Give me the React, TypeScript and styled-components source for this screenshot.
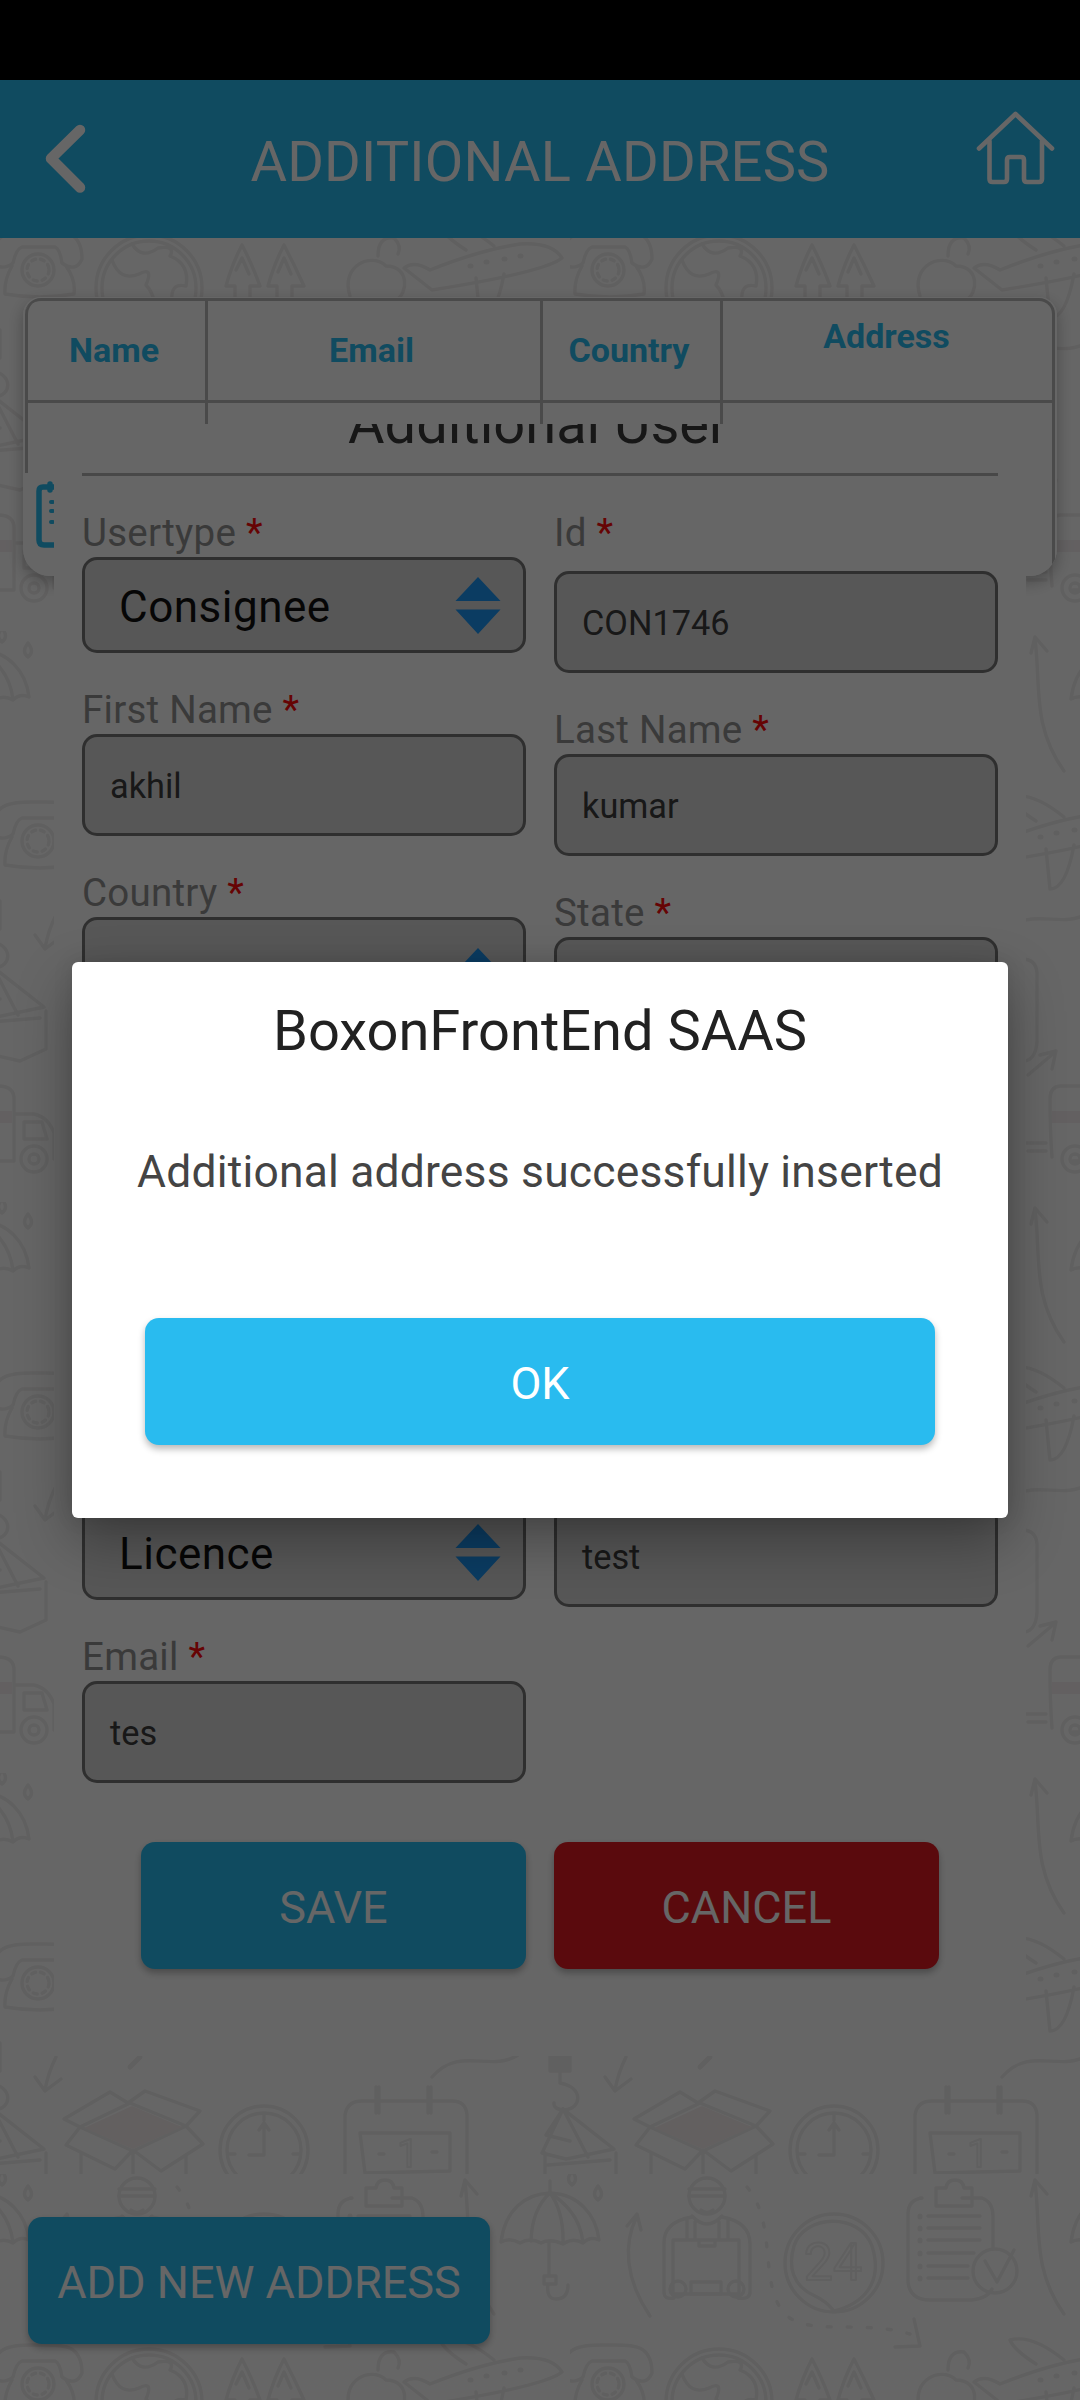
import React from "react";
import styled, { createGlobalStyle } from "styled-components";

const GlobalStyle = createGlobalStyle`
  *, *::before, *::after { box-sizing: border-box; }
  html, body { margin: 0; padding: 0; background: #000; }
  body { font-family: Roboto, "Noto Sans", sans-serif; -webkit-font-smoothing: antialiased; }
  h1, h2, p { margin: 0; font-weight: 400; }
  button { font: inherit; border: 0; padding: 0; }
`;

const BLUE = "#29bbef";

const Screen = styled.div`
  position: relative;
  display: flex;
  flex-direction: column;
  width: 1080px;
  height: 2400px;
  overflow: hidden;
  background: #fff;
`;

const StatusBar = styled.div`
  flex: 0 0 80px;
  background: #000;
`;

const Header = styled.header`
  flex: 0 0 158px;
  display: grid;
  grid-template-columns: 90px 1fr 90px;
  align-items: center;
  padding: 0 16px 0 28px;
  background: ${BLUE};
  color: #fff;
`;

const HeaderTitle = styled.h1`
  font-size: 56px;
  line-height: 64px;
  letter-spacing: 0.2px;
  text-align: center;
  padding: 6px 12px 0 0;
  white-space: nowrap;
`;

const BackIcon = styled.svg`
  width: 60px;
  height: 80px;
  margin-left: 6px;
`;

const HomeIcon = styled.svg`
  width: 80px;
  height: 80px;
  justify-self: end;
  margin: 0 9px 20px 0;
`;

const Main = styled.main`
  position: relative;
  flex: 0 0 1936px;
  display: grid;
  grid-template: 1936px / 1080px;
`;

const Backdrop = styled.svg`
  grid-area: 1 / 1;
  width: 100%;
  height: 100%;
`;

const TableCard = styled.section`
  grid-area: 1 / 1;
  position: relative;
  align-self: start;
  width: 1034px;
  height: 279px;
  margin: 59px 0 0 23px;
  padding: 1px 2px 0;
  overflow: hidden;
  border-radius: 18px 18px 27px 27px;
  background: #fff;
`;

const CardShadow = styled.div`
  grid-area: 1 / 1;
  align-self: start;
  width: 1034px;
  height: 279px;
  margin: 59px 0 0 23px;
  border-radius: 18px 18px 27px 27px;
  box-shadow: 0 6px 16px rgba(0, 0, 0, 0.28);
`;

const TableRow = styled.div<{ $height: number; $head?: boolean }>`
  display: grid;
  grid-template-columns: 180px 335px 180px 335px;
  height: ${(p) => p.$height}px;
  border: 0 solid #b9b9b9;
  border-right-width: 3px;
  border-top-width: 3px;
  border-radius: ${(p) => (p.$head ? "16px 16px 0 0" : "0")};
`;

const TableCell = styled.div<{ $lift?: boolean; $short?: boolean; $first?: boolean }>`
  display: flex;
  align-items: center;
  justify-content: center;
  height: ${(p) => (p.$short ? "70px" : "100%")};
  padding: 2px 5px ${(p) => (p.$lift ? 32 : 4)}px 0;
  border-left: 3px solid #b9b9b9;
  border-top-left-radius: ${(p) => (p.$first ? "14px" : "0")};
  color: ${BLUE};
  font-size: 34px;
  font-weight: 700;
`;

const RowIcon = styled.svg`
  display: block;
  width: 54px;
  height: 68px;
  margin: -96px 0 0 10px;
`;

const FormPanel = styled.section`
  position: absolute;
  left: 54px;
  top: 186px;
  display: flex;
  flex-direction: column;
  width: 972px;
  height: 1632px;
  padding: 0 28px;
  overflow: hidden;
  background: #fff;
`;

const FormTitle = styled.h2`
  height: 49px;
  padding-right: 4px;
  font-size: 56px;
  line-height: 64px;
  color: #3a3a3a;
  text-align: center;
  white-space: nowrap;
  & > span {
    display: inline-block;
    margin-top: -32px;
    vertical-align: top;
  }
`;

const Divider = styled.div`
  height: 3px;
  margin-bottom: 34px;
  background: #b3b3b3;
`;

const Columns = styled.div`
  display: grid;
  grid-template-columns: 444px 444px;
  column-gap: 28px;
  height: 1273px;
`;

const Column = styled.div<{ $tail?: number }>`
  display: flex;
  flex-direction: column;
  justify-content: space-between;
  padding-bottom: ${(p) => p.$tail ?? 0}px;
`;

const FieldGroup = styled.div`
  display: flex;
  flex-direction: column;
  gap: 34px;
`;

const Field = styled.div`
  display: flex;
  flex-direction: column;
`;

const Label = styled.div<{ $tall?: boolean }>`
  height: ${(p) => (p.$tall ? 61 : 47)}px;
  font-size: 38.5px;
  line-height: 45px;
  letter-spacing: 0.25px;
  color: #929292;
  white-space: nowrap;
`;

const Star = styled.span`
  color: #ff0a0a;
`;

const Box = styled.div<{ $height: number; $select?: boolean }>`
  display: flex;
  align-items: center;
  justify-content: space-between;
  height: ${(p) => p.$height}px;
  padding: ${(p) => (p.$select ? "0 22px 0 34px" : "2px 25px 0")};
  border: 3px solid #767676;
  border-radius: 15px;
  background: #d9d9d9;
  color: ${(p) => (p.$select ? "#111" : "#3c3c3c")};
  font-size: ${(p) => (p.$select ? 44 : 34.3)}px;
  letter-spacing: ${(p) => (p.$select ? 0.5 : 0)}px;
  & > span {
    padding-top: ${(p) => (p.$select ? 3 : 0)}px;
  }
`;

const Chevrons = styled.svg`
  width: 46px;
  height: 57px;
`;

const Actions = styled.div`
  display: flex;
  justify-content: center;
  gap: 28px;
  margin-top: 59px;
`;

const Button = styled.button<{ $width: number; $color?: string }>`
  display: flex;
  align-items: center;
  justify-content: center;
  width: ${(p) => p.$width}px;
  height: 127px;
  padding-top: 4px;
  border-radius: 14px;
  background: ${(p) => p.$color ?? BLUE};
  box-shadow: 0 4px 7px rgba(0, 0, 0, 0.28);
  color: #fff;
  font-size: 45px;
  white-space: nowrap;
`;

const Footer = styled.footer`
  flex: 0 0 226px;
  display: grid;
  grid-template: 226px / 1080px;
`;

const FooterBar = styled.div`
  grid-area: 1 / 1;
  z-index: 1;
  padding: 43px 28px;
`;

const Scrim = styled.div`
  position: absolute;
  inset: 80px 0 0;
  z-index: 10;
  display: flex;
  align-items: center;
  justify-content: center;
  background: rgba(0, 0, 0, 0.6);
`;

const Dialog = styled.div`
  display: flex;
  flex-direction: column;
  align-items: center;
  width: 936px;
  height: 556px;
  border-radius: 6px;
  background: #fff;
  box-shadow: 0 22px 56px rgba(0, 0, 0, 0.32), 0 0 20px rgba(0, 0, 0, 0.1);
`;

const DialogTitle = styled.h2`
  margin-top: 37px;
  font-size: 56px;
  line-height: 64px;
  color: #212121;
`;

const DialogText = styled.p`
  margin: 83px 0 120px;
  font-size: 44.4px;
  line-height: 52px;
  letter-spacing: 0.2px;
  color: #444;
`;

/* One repeat of the line-art wallpaper, 570 x 571 */
function Doodles() {
  return (
    <g fill="none" stroke="#f1efef" strokeWidth="3.4" strokeLinecap="round" strokeLinejoin="round">
      {/* umbrella */}
      <path d="M501 68C505 36 525 20 550 19C578 20 596 40 599 66Q590 62 583 69Q573 63 563 70Q550 64 541 69Q530 63 520 69Q510 63 501 68ZM550 19Q532 35 531 67M550 19Q564 38 563 70M550 19Q580 38 583 69M550 7V19M549 68V100M544 102h12v8h-12zM548 110Q546 125 556 125Q568 125 568 111" />
      <path d="M572 -3q-7 9 0 14q7 -5 0 -14M598 12q-7 9 0 14q7 -5 0 -14" />
      {/* curved arrows */}
      <path d="M80 142C55 105 53 70 67 42M57 52L67 40L71 56" />
      <path d="M494 140C462 95 471 55 465 8M461 22L465 6L477 20" />
      {/* courier */}
      <circle cx="137" cy="22" r="18" />
      <path d="M119 15h36M119 22h36M131 36q6 5 12 0M122 42Q137 58 152 42M122 43Q93 48 94 70V118Q94 126 104 124M152 43Q180 48 180 70V118Q180 126 168 124M103 66H169V120H103ZM117 46V64M125 48V64M149 48V64M158 46V64M129 66h16v6h-16z" />
      <circle cx="108" cy="115" r="8" />
      <circle cx="166" cy="115" r="8" />
      <path d="M121 108h30v12h-30z" />
      {/* dashed route */}
      <path d="M177 13C208 50 188 110 215 140C238 163 290 145 340 160" strokeDasharray="4 16" />
      <path d="M325 173L350 172L344 145" />
      {/* 24 hour badge */}
      <circle cx="264" cy="89" r="49" />
      <path d="M224 72C234 40 290 38 302 72C314 110 292 130 264 137Q256 127 245 122C222 112 218 92 224 72Z" />
      <text x="263" y="106" textAnchor="middle" fontFamily="Roboto, sans-serif" fontSize="52" strokeWidth="2">24</text>
      {/* checklist */}
      <path d="M350 24H352Q338 26 338 40V108Q340 126 360 126H402Q418 124 422 115M392 24H412Q423 28 423 42V75M366 14h10q1 -8 9 -8q8 0 9 8h8v18h-36zM358 42h52M358 54h52M358 66h52M358 79h46M358 92h40M358 104h40" />
      <path d="M350 42v1M350 54v1M350 66v1M350 79v1M350 92v1M350 104v1" strokeWidth="5" />
      <circle cx="425" cy="97" r="22" />
      <path d="M415 87L427 108L444 76" />
      {/* telephone */}
      <path d="M-9 199C-7 168 20 171 38 171C60 171 82 168 82 199Q76 213 62 203Q60 189 55 187H22Q16 189 13 203Q0 213 -9 199ZM12 206Q4 220 5 234Q40 240 74 234Q76 220 66 206" />
      <circle cx="38" cy="210" r="16" />
      <circle cx="38" cy="210" r="11" strokeDasharray="4 5" />
      {/* globe */}
      <circle cx="149" cy="228" r="53" />
      <circle cx="149" cy="228" r="47" />
      <path d="M112 200Q120 222 139 214Q154 206 146 225Q160 240 150 264M132 184Q142 200 158 188Q176 185 170 196Q190 204 186 226Q170 222 172 242" />
      {/* pine trees */}
      <path d="M242 185Q232 204 226 226H235V250M242 185Q252 204 260 226H250V250M236 210L242 198L249 214M284 185Q274 204 268 226H277V250M284 185Q294 204 304 226H292V250M278 212L284 198L291 214" />
      {/* cloud and aeroplane */}
      <path d="M350 236C340 205 372 192 386 206C410 206 408 234 396 240M378 196Q378 176 394 178Q402 186 398 194" />
      <path d="M404 208Q414 200 430 210Q480 190 520 184Q552 182 562 198Q545 212 432 230ZM466 190Q444 176 440 166Q462 160 494 186M476 218L480 258Q496 258 504 214" />
      <path d="M470 206h1M486 202h1M504 199h1M520 196h1" strokeWidth="5" />
      {/* flight trail */}
      <path d="M432 304C460 272 490 300 518 282" />
      {/* small arrows */}
      <path d="M56 284Q48 300 45 317M35 304L45 318L61 306" />
      <path d="M458 444L484 422M470 424L486 420L482 438" />
      <path d="M140 284L130 294" strokeWidth="5" />
      {/* crane load */}
      <path d="M550 270h20v28h-20z" fill="#f1efef" />
      <path d="M560 298V310C584 314 582 336 564 337Q553 336 554 330M563 336L542 380L566 386L614 376L563 336M563 336L588 384M545 380V420L590 430L616 418V380M563 336L546 362L570 368M548 392l62 -5" />
      {/* open carton */}
      <path d="M64 346L110 319L128 330L145 318L200 338L186 353L203 371L161 398L133 377L115 396L66 372L80 354ZM80 354L130 330L186 353L133 378ZM81 380V430L133 450L186 430V382M133 378V450" />
      <path d="M84 355L132 333L182 354L133 376Z" fill="#f7f1f1" stroke="none" />
      {/* clock */}
      <circle cx="264" cy="377" r="44" />
      <circle cx="264" cy="377" r="37" />
      <path d="M264 352V382H249M259 357L264 350L269 357M264 341v6M229 381h6M293 381h6" />
      {/* calendar */}
      <path d="M345 430V342Q347 328 362 328H452Q466 328 467 342V410Q466 428 455 430H345M360 360H450V398L365 400ZM376 314v26M379 314v26M428 314v26M431 314v26M379 381h5M432 379h5" />
      <text x="408" y="394" textAnchor="middle" fontFamily="Roboto, sans-serif" fontSize="38" strokeWidth="2">1</text>
      {/* truck */}
      <path d="M482 526Q480 500 480 468Q480 456 490 455H570Q584 456 584 468V530H503M584 483H604Q618 486 624 502V528M594 491h18l5 17h-23zM508 530h66" />
      <path d="M482 480h100v12h-100z" fill="#f7f1f3" stroke="none" />
      <circle cx="505" cy="528" r="13" />
      <circle cx="505" cy="528" r="5" />
      <circle cx="604" cy="528" r="13" />
      <circle cx="604" cy="528" r="5" />
      <path d="M456 512h20M458 520h18" />
    </g>
  );
}

function Wallpaper({ id, originY }: { id: string; originY: number }) {
  return (
    <Backdrop aria-hidden="true">
      <defs>
        <pattern id={id} x="0" y={originY} width="570" height="571" patternUnits="userSpaceOnUse">
          <Doodles />
          <g transform="translate(-570 0)">
            <Doodles />
          </g>
        </pattern>
      </defs>
      <rect width="100%" height="100%" fill={`url(#${id})`} />
    </Backdrop>
  );
}

function SelectArrows() {
  return (
    <Chevrons viewBox="0 0 46 57">
      <path d="M23 0L45.500 24H0.500ZM0.500 32.500H45.500L23 57Z" fill="#1c96f5" />
    </Chevrons>
  );
}

interface FormFieldProps {
  label?: string;
  value?: string;
  select?: boolean;
  tallLabel?: boolean;
  height?: number;
}

function FormField({ label, value, select, tallLabel, height }: FormFieldProps) {
  return (
    <Field>
      {label && (
        <Label $tall={tallLabel}>
          {label} <Star>*</Star>
        </Label>
      )}
      <Box $select={select} $height={height ?? (select ? 96 : 102)}>
        <span>{value}</span>
        {select && <SelectArrows />}
      </Box>
    </Field>
  );
}

export default function App() {
  return (
    <>
      <GlobalStyle />
      <Screen>
        <StatusBar />
        <Header>
          <BackIcon viewBox="0 0 60 80" fill="none" stroke="#fff" strokeWidth="10.500" strokeLinecap="round" strokeLinejoin="round">
            <path d="M46 11L17 39.500L46 68.500" />
          </BackIcon>
          <HeaderTitle>ADDITIONAL ADDRESS</HeaderTitle>
          <HomeIcon viewBox="0 0 80 80" fill="none" stroke="#fff" strokeWidth="4.600" strokeLinecap="round" strokeLinejoin="round">
            <path d="M4 39.500L40.500 5L77 39.500" />
            <path d="M14.500 32V70Q14.500 73 17.500 73H29Q32 73 32 70V51Q32 48 35 48H46Q49 48 49 51V70Q49 73 52 73H64Q67 73 67 70V32" />
          </HomeIcon>
        </Header>

        <Main>
          <Wallpaper id="mainDoodles" originY={-178} />
          <CardShadow />
          <TableCard>
            <TableRow $height={102} $head>
              <TableCell $first>Name</TableCell>
              <TableCell>Email</TableCell>
              <TableCell>Country</TableCell>
              <TableCell $lift>Address</TableCell>
            </TableRow>
            <TableRow $height={176}>
              <TableCell $short />
              <TableCell />
              <TableCell />
              <TableCell />
            </TableRow>
            <RowIcon viewBox="0 0 54 68" fill="none" stroke={BLUE} strokeWidth="5.500" strokeLinecap="round">
              <path d="M16 7H8Q4 7 4 11V60Q4 65 9 65H45Q50 65 50 60V11Q50 7 46 7H38M13 7H41" />
              <path d="M15 4V10M39 4V10" />
              <path d="M16 22h2M16 31h2M16 42h2" strokeWidth="4" />
            </RowIcon>
          </TableCard>

          <FormPanel>
            <FormTitle>
              <span>Additional User</span>
            </FormTitle>
            <Divider />
            <Columns>
              <Column>
                <FieldGroup>
                  <FormField label="Usertype" value="Consignee" select />
                  <FormField label="First Name" value="akhil" />
                  <FormField label="Country" select height={118} />
                </FieldGroup>
                <FieldGroup>
                  <FormField value="Licence" select />
                  <FormField label="Email" value="tes" />
                </FieldGroup>
              </Column>
              <Column $tail={176}>
                <FieldGroup>
                  <FormField label="Id" value="CON1746" tallLabel />
                  <FormField label="Last Name" value="kumar" />
                  <FormField label="State" />
                </FieldGroup>
                <FormField value="test" />
              </Column>
            </Columns>
            <Actions>
              <Button $width={385}>SAVE</Button>
              <Button $width={385} $color="#e01b22">CANCEL</Button>
            </Actions>
          </FormPanel>
        </Main>

        <Footer>
          <Wallpaper id="footerDoodles" originY={0} />
          <FooterBar>
            <Button $width={462}>ADD NEW ADDRESS</Button>
          </FooterBar>
        </Footer>

        <Scrim>
          <Dialog role="dialog">
            <DialogTitle>BoxonFrontEnd SAAS</DialogTitle>
            <DialogText>Additional address successfully inserted</DialogText>
            <Button $width={790}>OK</Button>
          </Dialog>
        </Scrim>
      </Screen>
    </>
  );
}
